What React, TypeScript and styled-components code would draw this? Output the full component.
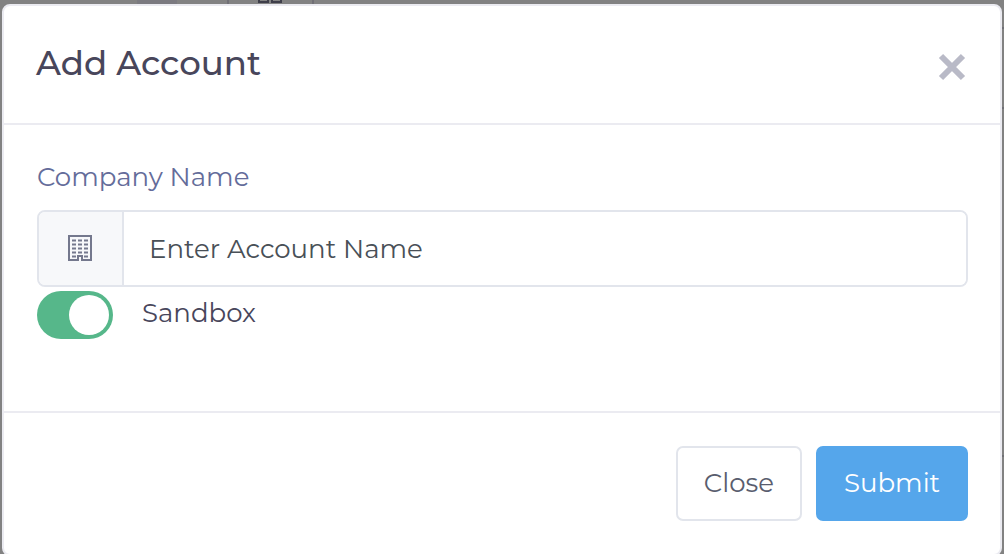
import React, { useState } from "react";
import styled, { createGlobalStyle } from "styled-components";

const GlobalStyle = createGlobalStyle`
  *, *::before, *::after { box-sizing: border-box; }
  body {
    margin: 0;
    overflow: hidden;
    background: #828282;
    font-family: Montserrat, Inter, "Open Sans", sans-serif;
    font-weight: 400;
    -webkit-font-smoothing: antialiased;
  }
  button, input { font: inherit; }
`;

const Backdrop = styled.div`
  min-height: 100vh;
  padding-right: 2px;
  background:
    linear-gradient(#6f6f75, #6f6f75) right 27px / 2px 2px no-repeat,
    linear-gradient(#6f6f75, #6f6f75) right 107px / 2px 2px no-repeat,
    linear-gradient(#6f6f75, #6f6f75) right 455px / 2px 2px no-repeat,
    #828282;
`;

const Toolbar = styled.div`
  display: flex;
  height: 4px;
  padding-left: 137px;
  gap: 50px;
`;

const ToolbarMark = styled.div`
  width: 40px;
  background: #7b7a80;
`;

const ToolbarTab = styled.div`
  display: flex;
  justify-content: center;
  width: 87px;
  padding-right: 2px;
  border: solid #706f76;
  border-width: 0 2px;
`;

const Dialog = styled.section`
  margin-left: 2px;
  background: #fff;
  border: 2px solid #ebebf1;
  border-radius: 8px;
`;

const Header = styled.header`
  display: flex;
  align-items: center;
  justify-content: space-between;
  height: 119px;
  padding: 0 34px 4px 32px;
  border-bottom: 2px solid #ebebf1;
`;

const Title = styled.h1`
  margin: 0;
  color: #48465b;
  font-size: 34px;
  line-height: 48px;
  font-weight: 500;
`;

const CloseIconButton = styled.button`
  display: flex;
  margin-top: 8px;
  padding: 0;
  border: 0;
  background: none;
  color: #b9bac7;
  cursor: pointer;
`;

const Body = styled.div`
  padding: 32px 32px 72px 33px;
`;

const FieldLabel = styled.label`
  display: block;
  margin-bottom: 13px;
  color: #646c9a;
  font-size: 26px;
  line-height: 40px;
`;

const InputGroup = styled.div`
  display: flex;
  height: 77px;
  border: 2px solid #e2e5ec;
  border-radius: 8px;
  overflow: hidden;
`;

const InputIcon = styled.span`
  display: flex;
  align-items: center;
  justify-content: center;
  width: 85px;
  padding: 0 2px 2px 0;
  background: #f7f8fa;
  border-right: 2px solid #e2e5ec;
  color: #74788d;
`;

const TextInput = styled.input`
  flex: 1;
  min-width: 0;
  padding: 0 25px;
  border: 0;
  outline: 0;
  background: #fff;
  color: #495057;
  font-size: 26px;
  &::placeholder { color: #495057; opacity: 1; }
`;

const SwitchRow = styled.label`
  display: flex;
  align-items: center;
  gap: 29px;
  margin-top: 4px;
  color: #48465b;
  font-size: 26px;
  line-height: 44px;
`;

const SwitchText = styled.span`
  padding-bottom: 4px;
`;

const Switch = styled.input`
  appearance: none;
  flex: none;
  width: 76px;
  height: 48px;
  margin: 0;
  padding: 4px;
  border-radius: 24px;
  background: #e2e5ec;
  cursor: pointer;
  &::before {
    content: "";
    display: block;
    width: 40px;
    height: 40px;
    border-radius: 50%;
    background: #fff;
  }
  &:checked { background: #56b78a; }
  &:checked::before { margin-left: auto; }
`;

const Footer = styled.footer`
  display: flex;
  justify-content: flex-end;
  gap: 14px;
  padding: 33px 32px 33px 33px;
  border-top: 2px solid #ebebf1;
`;

const Button = styled.button<{ $primary?: boolean }>`
  height: 75px;
  padding: 0 26px 2px;
  border: 2px solid ${(p) => (p.$primary ? "#55a6eb" : "#e2e5ec")};
  border-radius: 7px;
  background: ${(p) => (p.$primary ? "#55a6eb" : "#fff")};
  color: ${(p) => (p.$primary ? "#fff" : "#595d6e")};
  font-size: 26px;
  cursor: pointer;
`;

const BuildingIcon = () => (
  <svg width="24" height="26" viewBox="0 0 24 26" aria-hidden="true">
    <path
      d="M1 1H23V25H14V21H10V25H1Z"
      fill="none"
      stroke="currentColor"
      strokeWidth="2"
    />
    <path
      d="M4 5.5H8M10 5.5H14M16 5.5H20M4 9.5H8M10 9.5H14M16 9.5H20M4 13.5H8M10 13.5H14M16 13.5H20M4 17.5H8M10 17.5H14M16 17.5H20M4 21.5H8M16 21.5H20"
      stroke="currentColor"
      strokeWidth="2"
    />
  </svg>
);

const CrossIcon = () => (
  <svg width="28" height="28" viewBox="0 0 28 28" aria-hidden="true">
    <path d="M3 3L25 25M25 3L3 25" stroke="currentColor" strokeWidth="6" />
  </svg>
);

const GridIcon = () => (
  <svg width="24" height="4" viewBox="0 0 24 4" aria-hidden="true">
    <path d="M1 0V2H10V0M14 0V2H23V0" fill="none" stroke="#3f3e4a" strokeWidth="2" />
  </svg>
);

export default function App() {
  const [sandbox, setSandbox] = useState(true);
  return (
    <>
      <GlobalStyle />
      <Backdrop>
        <Toolbar>
          <ToolbarMark />
          <ToolbarTab>
            <GridIcon />
          </ToolbarTab>
        </Toolbar>
        <Dialog role="dialog" aria-labelledby="dialog-title">
          <Header>
            <Title id="dialog-title">Add Account</Title>
            <CloseIconButton type="button" aria-label="Close dialog">
              <CrossIcon />
            </CloseIconButton>
          </Header>
          <Body>
            <FieldLabel htmlFor="company">Company Name</FieldLabel>
            <InputGroup>
              <InputIcon>
                <BuildingIcon />
              </InputIcon>
              <TextInput id="company" type="text" placeholder="Enter Account Name" />
            </InputGroup>
            <SwitchRow>
              <Switch
                type="checkbox"
                checked={sandbox}
                onChange={(e) => setSandbox(e.target.checked)}
              />
              <SwitchText>Sandbox</SwitchText>
            </SwitchRow>
          </Body>
          <Footer>
            <Button type="button">Close</Button>
            <Button type="submit" $primary>
              Submit
            </Button>
          </Footer>
        </Dialog>
      </Backdrop>
    </>
  );
}
